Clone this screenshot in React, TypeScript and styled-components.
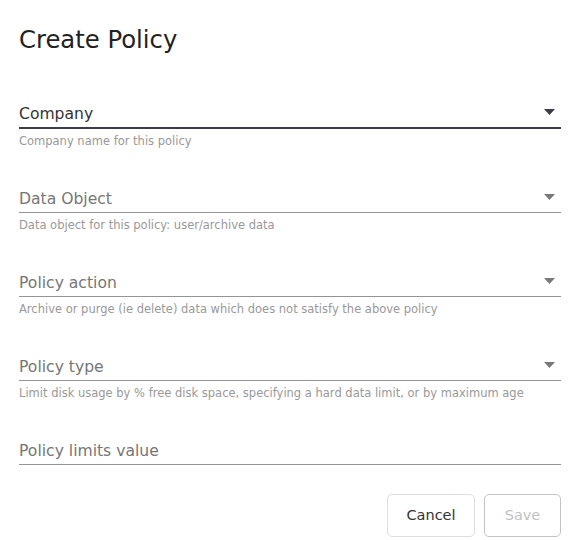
import styled, { createGlobalStyle } from 'styled-components';

const GlobalStyle = createGlobalStyle`
  body {
    margin: 0;
    background: #ffffff;
    font-family: "DejaVu Sans", "Liberation Sans", sans-serif;
  }
`;

type FieldSpec = {
  label: string;
  helper?: string;
  select?: boolean;
  focused?: boolean;
};

const fields: FieldSpec[] = [
  { label: 'Company', helper: 'Company name for this policy', select: true, focused: true },
  { label: 'Data Object', helper: 'Data object for this policy: user/archive data', select: true },
  { label: 'Policy action', helper: 'Archive or purge (ie delete) data which does not satisfy the above policy', select: true },
  { label: 'Policy type', helper: 'Limit disk usage by % free disk space, specifying a hard data limit, or by maximum age', select: true },
  { label: 'Policy limits value' },
];

const Arrow = ({ $dark }: { $dark?: boolean }) => (
  <svg width="11" height="6" viewBox="0 0 11 6">
    <path d="M0 0 L11 0 L5.5 6 Z" fill={$dark ? '#3a3d4a' : '#7a7a7a'} />
  </svg>
);

const App = () => {
  return (
    <>
      <GlobalStyle />
      <Dialog>
        <Title>Create Policy</Title>
        <Form>
          {fields.map((f) => (
            <Field key={f.label}>
              <InputRow $focused={f.focused}>
                <Label $focused={f.focused}>{f.label}</Label>
                {f.select && <Arrow $dark={f.focused} />}
              </InputRow>
              {f.helper && <Helper>{f.helper}</Helper>}
            </Field>
          ))}
        </Form>
        <Actions>
          <Button>Cancel</Button>
          <Button $disabled>Save</Button>
        </Actions>
      </Dialog>
    </>
  );
};

const Dialog = styled.div`
  width: 570px;
  height: 540px;
  box-sizing: border-box;
  padding: 24px 9px 0 19px;
  display: flex;
  flex-direction: column;
`;

const Title = styled.h2`
  margin: 0;
  font-size: 24.3px;
  line-height: 32px;
  font-weight: 400;
  color: #222222;
`;

const Form = styled.div`
  margin-top: 40px;
  display: flex;
  flex-direction: column;
  gap: 32px;
`;

const Field = styled.div`
  display: flex;
  flex-direction: column;
`;

const InputRow = styled.div<{ $focused?: boolean }>`
  height: 33px;
  box-sizing: border-box;
  display: flex;
  align-items: center;
  justify-content: space-between;
  padding-right: 6px;
  border-bottom: ${(p) => (p.$focused ? '2px solid #3a3d4a' : '1px solid #949494')};
  padding-top: ${(p) => (p.$focused ? '1px' : '2px')};
`;

const Label = styled.span<{ $focused?: boolean }>`
  padding-top: 4px;
  font-size: 15.6px;
  color: ${(p) => (p.$focused ? '#333333' : '#767676')};
`;

const Helper = styled.div`
  margin-top: 6px;
  font-size: 11.5px;
  line-height: 13px;
  color: #999999;
`;

const Actions = styled.div`
  margin-top: 29px;
  display: flex;
  justify-content: flex-end;
  gap: 9px;
`;

const Button = styled.button<{ $disabled?: boolean }>`
  height: 43px;
  min-width: ${(p) => (p.$disabled ? '77px' : '88px')};
  padding: 0 16px 2px;
  box-sizing: border-box;
  background: #ffffff;
  border-radius: 5px;
  font-family: inherit;
  font-size: 14.5px;
  border: 1px solid ${(p) => (p.$disabled ? '#c4c4c4' : '#dedede')};
  color: ${(p) => (p.$disabled ? '#c2c2c2' : '#333333')};
`;

export default App;
